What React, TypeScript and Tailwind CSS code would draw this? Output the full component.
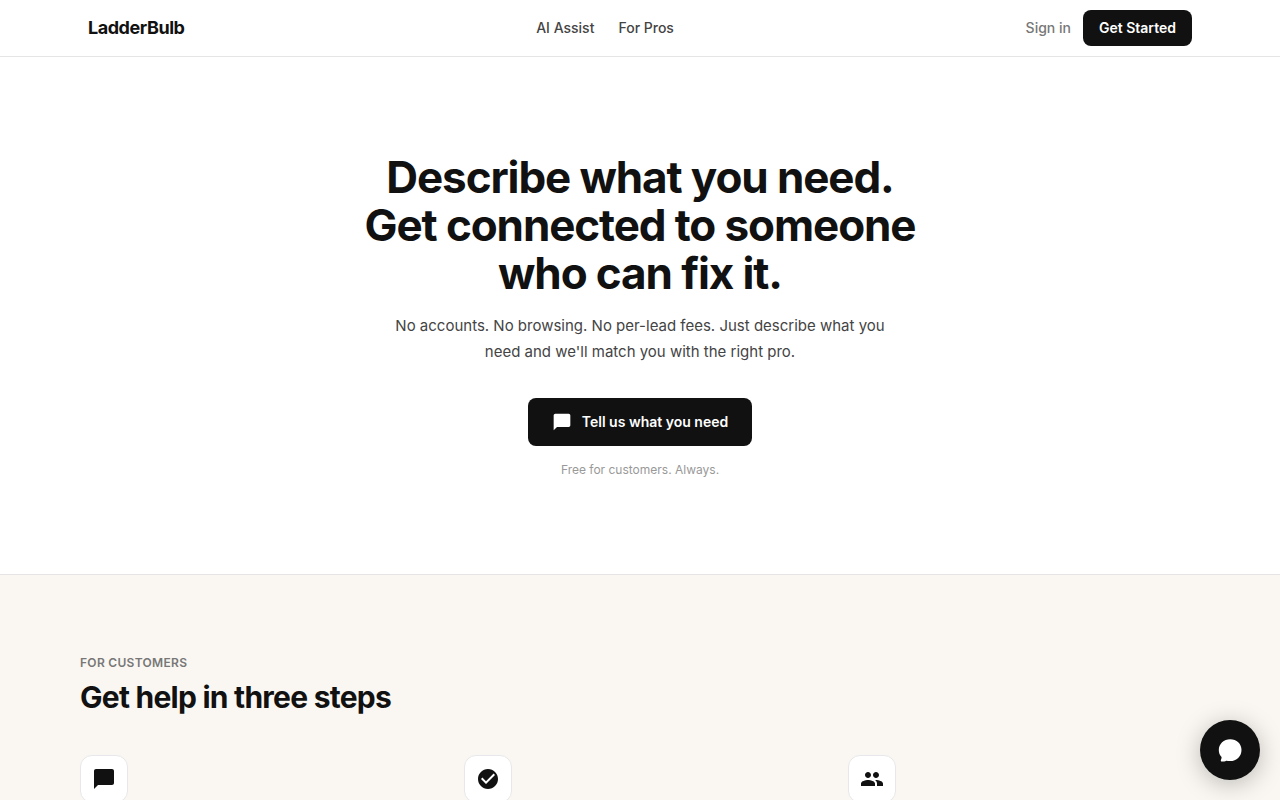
import React from 'react';
import { MdChatBubble, MdCheckCircle, MdPeople } from 'react-icons/md';
import type { IconType } from 'react-icons';

interface Step {
  id: string;
  label: string;
  icon: IconType;
}

const steps: Step[] = [
  { id: 'describe', label: 'Describe', icon: MdChatBubble },
  { id: 'confirm', label: 'Confirm', icon: MdCheckCircle },
  { id: 'connect', label: 'Connect', icon: MdPeople },
];

const Header: React.FC = () => (
  <header className="border-b border-[#e5e5e5] bg-white">
    <div className="mx-auto flex h-14 max-w-6xl items-center justify-between px-6">
      <a href="#home" className="text-lg font-bold tracking-tight">
        LadderBulb
      </a>
      <nav className="flex items-center gap-6 text-sm font-medium text-[#444]">
        <a href="#assist">AI Assist</a>
        <a href="#pros">For Pros</a>
      </nav>
      <div className="flex items-center gap-3 text-sm">
        <a href="#signin" className="font-medium text-[#777]">
          Sign in
        </a>
        <button type="button" className="h-9 rounded-lg bg-[#111] px-4 font-semibold text-white">
          Get Started
        </button>
      </div>
    </div>
  </header>
);

const Hero: React.FC = () => (
  <section className="flex flex-col items-center border-b border-[#e5e5e5] bg-white px-6 py-24 text-center">
    <h1 className="text-[44px] leading-[48px] font-bold tracking-tight">
      Describe what you need.
      <br />
      Get connected to someone
      <br />
      who can fix it.
    </h1>
    <p className="mt-4 max-w-[520px] text-[15px] leading-[26px] text-[#444]">
      No accounts. No browsing. No per-lead fees. Just describe what you need and we'll match you with the right pro.
    </p>
    <button
      type="button"
      className="mt-[33px] flex h-12 items-center gap-2.5 rounded-lg bg-[#111] px-6 text-sm font-semibold text-white"
    >
      <MdChatBubble className="size-5" />
      Tell us what you need
    </button>
    <p className="mt-4 text-xs leading-4 text-[#999]">Free for customers. Always.</p>
  </section>
);

const Steps: React.FC = () => (
  <section className="bg-[#faf7f2] px-6 py-20">
    <div className="mx-auto max-w-[1120px]">
      <p className="text-xs font-semibold tracking-wide text-[#777] uppercase">For customers</p>
      <h2 className="mt-2 text-[30px] leading-9 font-bold tracking-tight">Get help in three steps</h2>
      <ul className="mt-10 grid grid-cols-3 gap-8">
        {steps.map(({ id, label, icon: Icon }) => (
          <li key={id}>
            <div className="flex size-12 items-center justify-center rounded-xl border border-[#e8e8ec] bg-white">
              <Icon className="size-6" aria-label={label} />
            </div>
          </li>
        ))}
      </ul>
    </div>
  </section>
);

// Floating chat launcher, stays over the page
const ChatButton: React.FC = () => (
  <button
    type="button"
    aria-label="Open chat"
    className="fixed right-5 bottom-5 flex size-15 items-center justify-center rounded-full bg-[#111] text-white shadow-[0_4px_24px_rgba(0,0,0,0.25)]"
  >
    <svg viewBox="0 0 28 28" className="size-7" fill="currentColor" aria-hidden="true">
      <path d="M14.2 3.2C7.8 3.200 2.800 7.900 2.800 14c0 2.900 1 5.200 2.700 7.100.3.700-.1 1.700-.6 3-.3.900 0 1.500.8 1.500 1.700 0 3.300-.2 4.600-.9 1.200.3 2.500.4 3.900.4 6.400 0 11.300-4.800 11.300-11.100S20.600 3.200 14.200 3.200z" />
    </svg>
  </button>
);

const App: React.FC = () => {
  return (
    <div className="min-h-screen bg-[#faf7f2] font-[Inter,'Liberation_Sans',sans-serif] text-[#111]">
      <Header />
      <main>
        <Hero />
        <Steps />
      </main>
      <ChatButton />
    </div>
  );
};

export default App;
